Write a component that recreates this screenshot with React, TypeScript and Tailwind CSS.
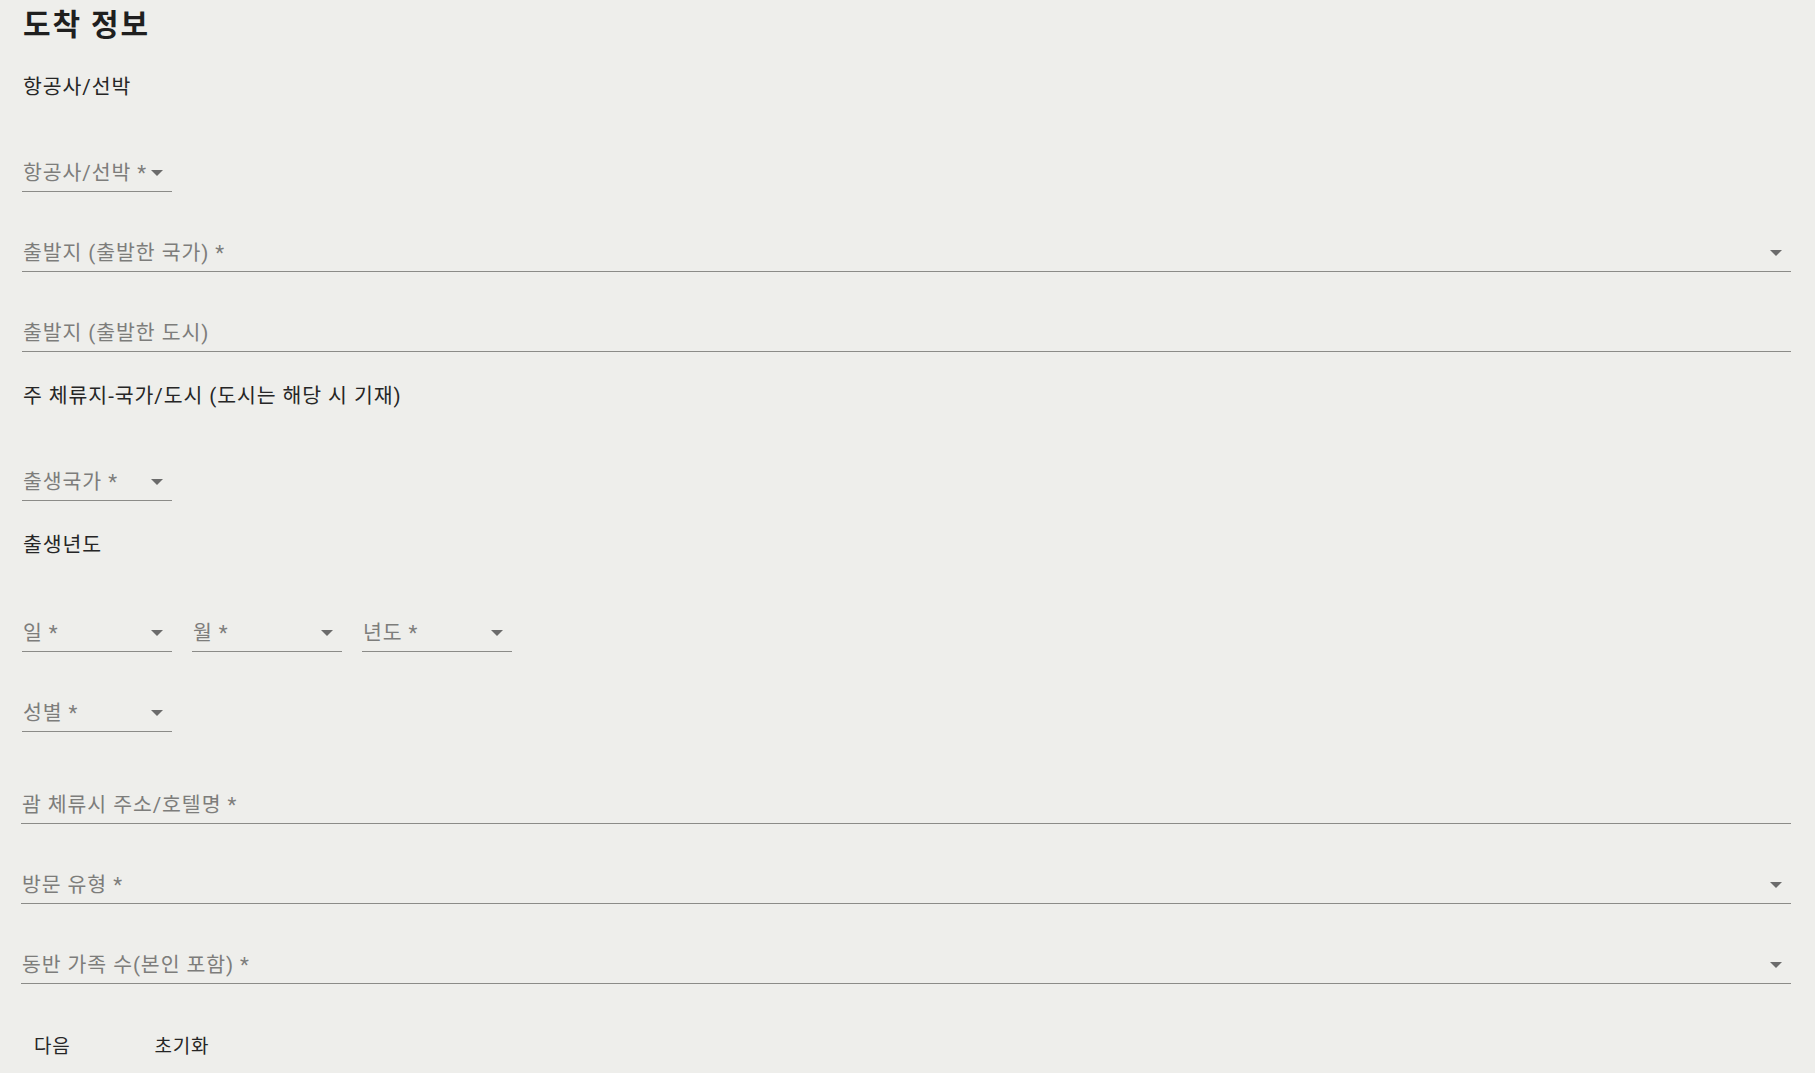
import React from "react";

const FONT = { fontFamily: 'Roboto, "Noto Sans CJK KR", sans-serif' };

function Arrow() {
  return (
    <svg
      className="absolute right-[9px] top-[12px]"
      width="12"
      height="6"
      viewBox="0 0 12 6"
    >
      <path d="M0 0 L12 0 L6 6 Z" fill="#6b6b6b" />
    </svg>
  );
}

function Field({
  label,
  select,
  className,
}: {
  label: string;
  select?: boolean;
  className?: string;
}) {
  return (
    <div
      className={
        "relative h-[34px] border-b border-[#8b8b88] pt-[1px] text-[20.5px] leading-[28px] tracking-[0.045em] text-[#7d7d7b] whitespace-nowrap " +
        (className ?? "")
      }
    >
      <span className="pl-[1px]">{label}</span>
      {select && <Arrow />}
    </div>
  );
}

export default function App() {
  return (
    <div
      className="min-h-[1073px] w-full bg-[#eeeeeb] pl-[22px] pr-[24px] pt-[7px] text-[#1f1f1f]"
      style={FONT}
    >
      <h1 className="h-[38px] pl-[1px] text-[30px] font-bold leading-[36px] tracking-[0.06em]">
        도착 정보
      </h1>
      <div className="mt-[29px] h-[28px] pl-[1px] text-[20.5px] leading-[26px] tracking-[0.045em] text-[#262626]">
        항공사/선박
      </div>
      <Field label="항공사/선박 *" select className="mt-[56px] w-[150px]" />
      <Field label="출발지 (출발한 국가) *" select className="mt-[46px]" />
      <Field label="출발지 (출발한 도시)" className="mt-[46px]" />
      <div className="mt-[31px] h-[28px] pl-[1px] text-[20.5px] leading-[26px] tracking-[0.045em] text-[#262626]">
        주 체류지-국가/도시 (도시는 해당 시 기재)
      </div>
      <Field label="출생국가 *" select className="mt-[56px] w-[150px]" />
      <div className="mt-[31px] h-[28px] pl-[1px] text-[20.5px] leading-[26px] tracking-[0.045em] text-[#262626]">
        출생년도
      </div>
      <div className="mt-[58px] flex gap-[20px]">
        <Field label="일 *" select className="w-[150px]" />
        <Field label="월 *" select className="w-[150px]" />
        <Field label="년도 *" select className="w-[150px]" />
      </div>
      <Field label="성별 *" select className="mt-[46px] w-[150px]" />
      <div className="-ml-[1px]">
        <Field label="괌 체류시 주소/호텔명 *" className="mt-[58px]" />
        <Field label="방문 유형 *" select className="mt-[46px]" />
        <Field label="동반 가족 수(본인 포함) *" select className="mt-[46px]" />
      </div>
      <div className="mt-[46px] flex items-center text-[19px] leading-[28px] tracking-[0.04em] text-[#262626]">
        <button className="px-[12px] py-[3px]">다음</button>
        <button className="ml-[60px] px-[12px] py-[3px]">초기화</button>
      </div>
    </div>
  );
}
